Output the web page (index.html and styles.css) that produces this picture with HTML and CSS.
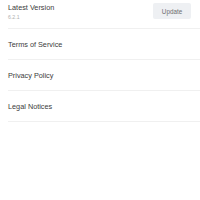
FILE: index.html
```html
<!DOCTYPE html>
<html>
<head>
<meta charset="utf-8">
<link rel="stylesheet" href="styles.css">
</head>
<body>
<ul class="list">
  <li class="row row-version">
    <div class="info">
      <div class="title">Latest Version</div>
      <div class="sub">6.2.1</div>
    </div>
    <button class="btn">Update</button>
  </li>
  <li class="row"><span class="title">Terms of Service</span></li>
  <li class="row"><span class="title">Privacy Policy</span></li>
  <li class="row"><span class="title">Legal Notices</span></li>
</ul>
</body>
</html>
```
FILE: styles.css
```css
html, body {
  margin: 0;
  padding: 0;
  background: #ffffff;
}
body {
  font-family: "Liberation Sans", Arial, sans-serif;
  color: #3c3c3c;
}
.list {
  list-style: none;
  margin: 0 0 0 8px;
  padding: 0;
}
.row {
  display: flex;
  align-items: center;
  justify-content: space-between;
  height: 30px;
  padding-right: 9px;
  border-bottom: 1px solid #f0f0f0;
}
.row-version {
  height: 28px;
  align-items: flex-start;
}
.title {
  font-size: 7.3px;
  line-height: 9px;
}
.info {
  padding-top: 2.5px;
}
.sub {
  margin-top: 2.5px;
  font-size: 5.2px;
  line-height: 6px;
  color: #b0b0b0;
}
.btn {
  margin-top: 3px;
  width: 38px;
  height: 16px;
  padding: 0;
  border: none;
  border-radius: 2px;
  background: #eef0f3;
  color: #6e6e6e;
  font-family: "Liberation Sans", Arial, sans-serif;
  font-size: 6.3px;
}
```
